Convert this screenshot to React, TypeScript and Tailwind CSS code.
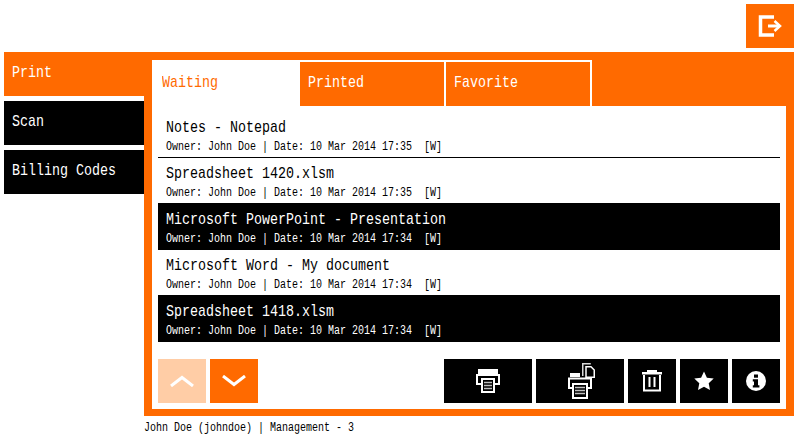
const rows = [
  { title: "Notes - Notepad", time: "17:35", selected: false, divider: true },
  { title: "Spreadsheet 1420.xlsm", time: "17:35", selected: false, divider: false },
  { title: "Microsoft PowerPoint - Presentation", time: "17:34", selected: true, divider: false },
  { title: "Microsoft Word - My document", time: "17:34", selected: false, divider: false },
  { title: "Spreadsheet 1418.xlsm", time: "17:34", selected: true, divider: false },
]

// the device font is tall and narrow, so the mono face gets squeezed horizontally
function Label({ children }: { children: string }) {
  return <span className="inline-block origin-left scale-x-[0.784] text-[17px] leading-5 whitespace-pre">{children}</span>
}

function Small({ children }: { children: string }) {
  return <span className="inline-block origin-left scale-x-[0.833] text-[12px] leading-3 whitespace-pre">{children}</span>
}

function PrinterIcon() {
  return (
    <svg width="24" height="24" viewBox="0 0 24 24" fill="none" stroke="currentColor">
      <path d="M2 0h20v5H2z" fill="currentColor" stroke="none" />
      <path d="M5 15H1V6h22v9h-4" strokeWidth="2" />
      <path d="M6 10h12v13H6z" strokeWidth="2" />
      <path d="M8 13.500h8M8 16.500h8M8 19.500h8" strokeWidth="1.500" opacity="0.75" />
    </svg>
  )
}

function CopyPrinterIcon() {
  return (
    <svg width="32" height="36" viewBox="0 0 32 36" fill="none" stroke="currentColor">
      <path d="M18.750 13V.750h8" strokeWidth="1.500" opacity="0.85" />
      <path d="M22 14.250V3.750h5l3.250 3.250v7.250z" strokeWidth="1.500" />
      <path d="M6 10h10v4H6z" fill="currentColor" stroke="none" />
      <path d="M8 25H5V15.500h22V25h-3" strokeWidth="2" />
      <path d="M9 21h14v14H9z" fill="#000" strokeWidth="2" />
      <path d="M11 24.500h10M11 27.500h10M11 30.500h10" strokeWidth="1.500" opacity="0.75" />
    </svg>
  )
}

function TrashIcon() {
  return (
    <svg width="24" height="24" viewBox="0 0 24 24" fill="none" stroke="currentColor">
      <path d="M7 1h10v2H7zM2 3h20v2.500H2z" fill="currentColor" stroke="none" />
      <path d="M4 6v15.500h16V6" strokeWidth="2" />
      <path d="M9.500 8v10M14.500 8v10" strokeWidth="2" />
    </svg>
  )
}

function StarIcon() {
  return (
    <svg width="22" height="22" viewBox="0 0 22 22" fill="currentColor">
      <path d="M11 1.500l2.900 6.300 6.800.8-5 4.700 1.300 6.800-6-3.400-6 3.400 1.300-6.800-5-4.700 6.800-.8z" />
    </svg>
  )
}

function InfoIcon() {
  return (
    <svg width="20" height="20" viewBox="0 0 20 20">
      <circle cx="10" cy="10" r="10" fill="currentColor" />
      <rect x="8" y="3.500" width="4" height="3.200" fill="#000" />
      <path d="M6.800 8.200H12v6h1.400v2.400H6.800v-2.400H8v-3.600H6.800z" fill="#000" />
    </svg>
  )
}

function LogoutIcon() {
  return (
    <svg width="24" height="22" viewBox="0 0 24 22" fill="none" stroke="currentColor">
      <path d="M16 2H2.500v18H16" strokeWidth="3.500" />
      <path d="M10 11h11" strokeWidth="3" />
      <path d="M16.500 6l5.500 5-5.500 5" strokeWidth="2.500" />
    </svg>
  )
}

function Chevron({ up }: { up?: boolean }) {
  return (
    <svg width="24" height="12" viewBox="0 0 24 12" fill="none" stroke="currentColor" strokeWidth="3">
      <path d={up ? "M1 11 12 2.500 23 11" : "M1 1l11 8.500L23 1"} />
    </svg>
  )
}

export default function App() {
  return (
    <div className="h-[442px] w-[798px] bg-white px-1 pt-1 font-['Liberation_Mono',monospace] text-black">
      <header className="mb-1 flex justify-end">
        <button className="flex h-11 w-12 items-center justify-center bg-[#ff6a00] text-white">
          <LogoutIcon />
        </button>
      </header>

      <div className="flex items-start">
        {/* left nav */}
        <nav className="flex w-[140px] flex-col gap-[5px] text-white">
          {["Print", "Scan", "Billing Codes"].map((item, i) => (
            <div key={item} className={`flex h-11 items-center pb-0.5 pl-2 ${i === 0 ? "bg-[#ff6a00]" : "bg-black"}`}>
              <Label>{item}</Label>
            </div>
          ))}
        </nav>

        <main className="h-[364px] w-[650px] bg-[#ff6a00] pt-2 pr-2 pb-[7px] pl-2">
          <div className="flex h-[46px]">
            <div className="flex w-[148px] items-center bg-white pl-2.5 text-[#ff6a00]"><Label>Waiting</Label></div>
            <div className="flex w-[146px] items-center border-t-2 border-r-2 border-white pb-0.5 pl-2 text-white"><Label>Printed</Label></div>
            <div className="flex w-[146px] items-center border-t-2 border-r-2 border-white pb-0.5 pl-2 text-white"><Label>Favorite</Label></div>
          </div>

          <div className="h-[303px] bg-white px-1.5 pt-[5px]">
            <ul>
              {rows.map((row) => (
                <li
                  key={row.title}
                  className={`pt-[7px] pl-2 ${row.selected || row.divider ? "-mb-px h-[47px]" : "h-[46px]"} ${row.selected ? "bg-black text-white" : ""} ${row.divider ? "border-b border-black" : ""}`}
                >
                  <div className="flex h-5"><Label>{row.title}</Label></div>
                  <div className="mt-[3px] flex h-3"><Small>{`Owner: John Doe | Date: 10 Mar 2014 ${row.time}  [W]`}</Small></div>
                </li>
              ))}
            </ul>

            <div className="mt-[18px] flex items-center gap-1 text-white">
              <button className="flex h-11 w-12 items-center justify-center bg-[#ffcda6]"><Chevron up /></button>
              <button className="flex h-11 w-12 items-center justify-center bg-[#ff6a00]"><Chevron /></button>
              <div className="flex-1" />
              <button className="flex h-11 w-[88px] items-center justify-center bg-black"><PrinterIcon /></button>
              <button className="flex h-11 w-[88px] items-center justify-center bg-black"><CopyPrinterIcon /></button>
              <button className="flex h-11 w-12 items-center justify-center bg-black"><TrashIcon /></button>
              <button className="flex h-11 w-12 items-center justify-center bg-black"><StarIcon /></button>
              <button className="flex h-11 w-12 items-center justify-center bg-black"><InfoIcon /></button>
            </div>
          </div>
        </main>
      </div>

      <footer className="mt-1.5 flex pl-[140px]"><Small>John Doe (johndoe) | Management - 3</Small></footer>
    </div>
  )
}
